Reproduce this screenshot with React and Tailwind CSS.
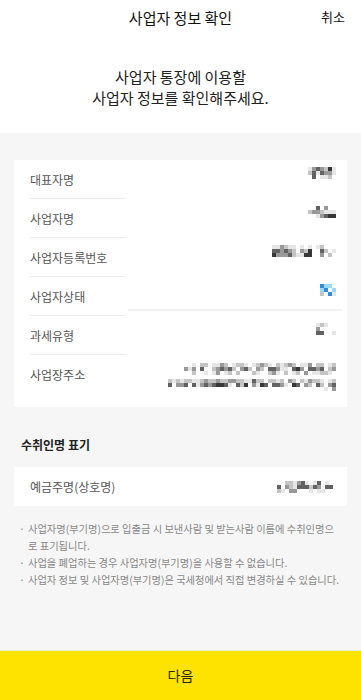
import React from 'react';

const shade = {
  '.': 'transparent',
  a: '#e6e6e6',
  b: '#c4c4c4',
  c: '#999999',
  d: '#626262',
  e: '#383838',
  x: '#2f8fd6',
  y: '#9ad8f5',
};

// pixelated (blurred-out) value
function Mosaic({ rows }) {
  return (
    <div className="flex flex-col items-end">
      {rows.map((r, i) => (
        <div key={i} className="flex">
          {r.split('').map((ch, j) => (
            <span key={j} className="block w-[4px] h-[4px]" style={{ background: shade[ch] }} />
          ))}
        </div>
      ))}
    </div>
  );
}

const rows = [
  { label: '대표자명', value: ['acdcbea', 'bdadcca', '.d.aab.'] },
  { label: '사업자명', value: ['..d.c..', 'bccbaaa', '..acdee'] },
  { label: '사업자등록번호', value: ['aacbaa.a.a.ab...', 'ddcdcb.cbe..db.a', 'ecccdbaaee..c.b.'] },
  { label: '사업자상태', value: ['xyy.', 'yx.y', 'b.xa'], line: true },
  { label: '과세유형', value: ['aba..', 'c....', 'dd..a'] },
];

export default function App() {
  return (
    <div className="w-[361px] h-[700px] flex flex-col bg-[#f6f6f6] text-[#111] overflow-hidden" style={{ fontFamily: '"Noto Sans CJK KR", "Noto Sans", sans-serif' }}>
      <div className="bg-white">
        <div className="relative h-[35px] flex items-center justify-center">
          <h1 className="text-[15px] leading-none">사업자 정보 확인</h1>
          <button className="absolute right-[16px] top-[10px] text-[13px] leading-none">취소</button>
        </div>
        <div className="pt-[31px] pb-[25px] text-center text-[15px] leading-[21px] text-[#222]">
          <p>사업자 통장에 이용할</p>
          <p>사업자 정보를 확인해주세요.</p>
        </div>
      </div>

      <div className="pt-[27px] px-[14px]">
        <div className="bg-white pl-[16px] pr-[11px] pb-[13px]">
          {rows.map((r, i) => (
            <div key={i} className="relative h-[39px] flex items-center justify-between">
              <span className="text-[12px] text-[#555]">{r.label}</span>
              <div className="self-start pt-[7px]"><Mosaic rows={r.value} /></div>
              <div className="absolute left-0 bottom-0 w-[96px] h-px bg-[#ececec]" />
              {r.line && <div className="absolute left-[98px] right-[-6px] bottom-[5px] h-[2px] bg-[#f1f1f1]" />}
            </div>
          ))}
          <div className="h-[39px] flex items-center justify-between">
            <span className="text-[12px] text-[#555]">사업장주소</span>
            <div className="self-start pt-[8px] flex flex-col items-end gap-[4px]">
              <Mosaic rows={[
                '..a.bb.aacb.abba.abcba.babcb.aac.bb.ab',
                'cac.d..bcdcdb.cdb.cb.ddcaa.dec.ddcd.bc',
                '..b..a.ac.ab.b...ba..bca.b.ab.c.aabba.',
              ]} />
              <Mosaic rows={[
                'bababbaabcbbcbbccbbaadbb.bbab.cb.bacbba.ab',
                'd.ccd.dacdcdeeda.dbe.caed.ddca.ed.cb.db.cd',
                '.......................................a.c',
              ]} />
            </div>
          </div>
        </div>
      </div>

      <h2 className="mt-[32px] ml-[21px] text-[12px] font-bold leading-none text-[#222]">수취인명 표기</h2>

      <div className="mt-[16px] mx-[14px] bg-white h-[39px] pl-[16px] pr-[14px] flex items-center justify-between">
        <span className="text-[12px] text-[#555]">예금주명(상호명)</span>
        <Mosaic rows={['..bbacda.ad.a.', 'd.cbadddbdc.dd', 'ba.cc...a.aa..']} />
      </div>

      <ul className="mt-[14px] pl-[19px] pr-[20px] text-[10.25px] leading-[17px] text-[#888] break-all">
        <li className="flex"><span className="w-[9px] shrink-0">·</span><span>사업자명(부기명)으로 입출금 시 보낸사람 및 받는사람 이름에 수취인명으로 표기됩니다.</span></li>
        <li className="flex"><span className="w-[9px] shrink-0">·</span><span>사업을 폐업하는 경우 사업자명(부기명)을 사용할 수 없습니다.</span></li>
        <li className="flex"><span className="w-[9px] shrink-0">·</span><span>사업자 정보 및 사업자명(부기명)은 국세청에서 직접 변경하실 수 있습니다.</span></li>
      </ul>

      <button className="mt-auto h-[50px] w-full bg-[#ffe300] text-[14px] text-[#222] border-t border-[#ececd0]">다음</button>
    </div>
  );
}
